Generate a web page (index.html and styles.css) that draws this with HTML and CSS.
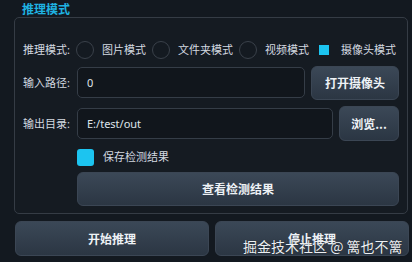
FILE: index.html
```html
<!DOCTYPE html>
<html lang="zh">
<head>
<meta charset="utf-8">
<link rel="stylesheet" href="styles.css">
</head>
<body>
<div class="page">
  <div class="group-title">推理模式</div>
  <div class="group-box">
    <div class="row mode-row">
      <span class="label mode-label">推理模式:</span>
      <label class="radio"><span class="dot"></span><span>图片模式</span></label>
      <label class="radio"><span class="dot"></span><span>文件夹模式</span></label>
      <label class="radio"><span class="dot"></span><span>视频模式</span></label>
      <label class="radio checked"><span class="dot"></span><span>摄像头模式</span></label>
    </div>
    <div class="row field-row">
      <span class="label">输入路径:</span>
      <div class="input">0</div>
      <button class="btn btn-wide">打开摄像头</button>
    </div>
    <div class="row field-row">
      <span class="label">输出目录:</span>
      <div class="input">E:/test/out</div>
      <button class="btn btn-narrow">浏览...</button>
    </div>
    <div class="row indent check-row">
      <span class="checkbox"></span>
      <span>保存检测结果</span>
    </div>
    <div class="row indent">
      <button class="btn btn-full">查看检测结果</button>
    </div>
  </div>
  <div class="actions">
    <button class="btn btn-action">开始推理</button>
    <button class="btn btn-action">停止推理</button>
  </div>
  <div class="watermark">掘金技术社区 @ 篱也不篱</div>
</div>
</body>
</html>
```

FILE: styles.css
```css
* { box-sizing: border-box; }
html, body {
  margin: 0;
  padding: 0;
  background: #131920;
  width: 412px;
  height: 262px;
  overflow: hidden;
}
body {
  font-family: "Noto Sans", "Noto Sans CJK SC", sans-serif;
  font-size: 11px;
  color: #d3d9e0;
}
.page {
  position: relative;
  padding: 3px 4px 0 14px;
  display: flex;
  flex-direction: column;
}
.group-title {
  margin-left: 8px;
  font-size: 12px;
  line-height: 14px;
  height: 14px;
  font-weight: 700;
  color: #1fb3e2;
}
.group-box {
  border: 1px solid #353c45;
  border-radius: 5px;
  background: #151b22;
  padding: 23px 8px 7px 8px;
  display: flex;
  flex-direction: column;
  gap: 6px;
}
.row {
  display: flex;
  align-items: center;
}
.label {
  width: 48px;
  margin-right: 6px;
  line-height: 14px;
  white-space: nowrap;
}
.mode-row { height: 18px; }
.mode-label { width: auto; }
.radio {
  display: flex;
  align-items: center;
  margin-right: 6px;
  line-height: 14px;
  white-space: nowrap;
}
.dot {
  width: 18px;
  height: 18px;
  border-radius: 50%;
  border: 1px solid #3a414a;
  background: #141a21;
  margin-right: 8px;
  flex: none;
}
.radio.checked .dot {
  border: none;
  border-radius: 0;
  background: transparent;
  display: flex;
  align-items: center;
  justify-content: center;
}
.radio.checked .dot::after {
  content: "";
  width: 10px;
  height: 10px;
  background: #1cc4f0;
}
.field-row { height: 35px; }
.input {
  flex: 1;
  height: 31px;
  border: 1px solid #353d47;
  border-radius: 5px;
  background: #11161c;
  padding-left: 9px;
  display: flex;
  align-items: center;
  font-size: 11px;
  color: #dfe4ea;
  margin-right: 6px;
}
.btn {
  font-family: "Noto Sans CJK SC", "Noto Sans", sans-serif;
  font-size: 12px;
  font-weight: 700;
  color: #eef2f6;
  border: 1px solid #3b4654;
  border-radius: 6px;
  background: linear-gradient(#3b4857, #2b3643);
  padding: 0;
  display: flex;
  align-items: center;
  justify-content: center;
  line-height: 14px;
}
.btn-wide { width: 88px; height: 34px; }
.btn-narrow { width: 60px; height: 35px; }
.indent { margin-left: 54px; }
.check-row {
  height: 18px;
  margin-top: 1px;
  line-height: 14px;
}
.checkbox {
  width: 17px;
  height: 17px;
  border-radius: 3px;
  background: #1cc4f0;
  margin-right: 9px;
  flex: none;
}
.btn-full { flex: 1; height: 34px; }
.actions {
  margin-top: 7px;
  padding-left: 1px;
  display: flex;
  gap: 6px;
  margin-right: -1px;
}
.btn-action {
  flex: 1;
  height: 35px;
  font-size: 12px;
}
.watermark {
  position: absolute;
  left: 243px;
  top: 237px;
  font-family: "Noto Sans CJK SC", sans-serif;
  font-size: 14px;
  line-height: 18px;
  color: #eceff2;
  white-space: nowrap;
  text-shadow: 0 0 1px rgba(0,0,0,0.6);
}
```
